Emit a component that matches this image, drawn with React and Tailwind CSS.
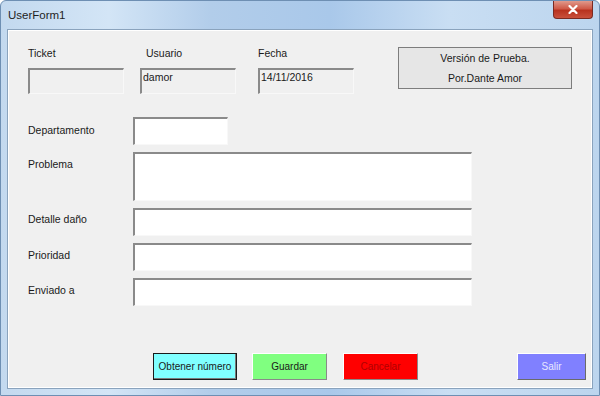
import React from 'react'

const font = { fontFamily: '"Liberation Sans", Arial, sans-serif' }

function Label({ children, className = '' }) {
  return <div className={`text-[10.5px] leading-[14px] text-[#1a1a1a] ${className}`}>{children}</div>
}

function Box({ className = '', children }) {
  return (
    <div
      className={`border-t-2 border-l-2 border-r border-b border-t-[#8a8a8a] border-l-[#8a8a8a] border-r-[#f8f8f8] border-b-[#f8f8f8] text-[10.5px] leading-[14px] text-[#1a1a1a] pl-[1px] ${className}`}
    >
      {children}
    </div>
  )
}

function FormRow({ label, boxClass, labelPad = 'pt-[5px]' }) {
  return (
    <div className="flex items-start">
      <Label className={`w-[105px] ${labelPad}`}>{label}</Label>
      <Box className={`bg-white ${boxClass}`} />
    </div>
  )
}

function Btn({ children, className = '' }) {
  return (
    <button
      className={`h-[27px] flex items-center justify-center text-[10px] border ${className}`}
    >
      {children}
    </button>
  )
}

export default function App() {
  return (
    <div
      className="w-[600px] h-[396px] flex flex-col overflow-hidden bg-[linear-gradient(90deg,#c3d9ef_0%,#d3e5f6_18%,#b2cdea_35%,#a9c8ea_55%,#c9def3_75%,#bcd5ee_100%)] border border-[#6e8fb3] rounded-t-[6px]"
      style={font}
    >
      {/* Title bar */}
      <div className="h-[28px] flex items-start justify-between shrink-0">
        <div className="pl-[7px] pt-[6px] text-[11.5px] text-[#1e1e1e]">UserForm1</div>
        <div className="mr-[6px] w-[40px] h-[18px] rounded-b-[4px] border border-t-0 border-[#7a2a22] bg-[linear-gradient(180deg,#e09a8c_0%,#cf5a48_45%,#b8321f_55%,#c9503c_100%)] flex items-center justify-center">
          <svg width="10" height="9" viewBox="0 0 10 9">
            <path d="M1.5 1 L8.5 8 M8.5 1 L1.5 8" stroke="#ffffff" strokeWidth="2.2" strokeLinecap="round" />
          </svg>
        </div>
      </div>

      {/* Client area */}
      <div className="mx-[6px] h-[360px] bg-[#f0f0f0] border border-[#8aa3bd] shadow-[inset_0_0_0_1px_#ffffff] flex flex-col">
        {/* Top row */}
        <div className="flex items-start pl-[20px] pt-[16px]">
          <div className="w-[96px]">
            <Label className="mb-[8px]">Ticket</Label>
            <Box className="h-[26px] bg-[#f0f0f0]" />
          </div>
          <div className="w-[96px] ml-[16px]">
            <Label className="mb-[8px] pl-[6px]">Usuario</Label>
            <Box className="h-[26px] bg-[#f0f0f0]">damor</Box>
          </div>
          <div className="w-[96px] ml-[22px]">
            <Label className="mb-[8px]">Fecha</Label>
            <Box className="h-[26px] bg-[#f0f0f0]">14/11/2016</Box>
          </div>
          <div className="ml-[44px] mt-[1px] w-[174px] h-[42px] border border-[#7d7d7d] bg-[#e6e6e6] flex flex-col items-center justify-center gap-[6px] text-[10.5px] leading-[14px] text-[#1a1a1a]">
            <div>Versión de Prueba.</div>
            <div>Por.Dante Amor</div>
          </div>
        </div>

        {/* Form rows */}
        <div className="flex flex-col gap-[7px] pl-[20px] mt-[23px]">
          <FormRow label="Departamento" boxClass="w-[95px] h-[28px]" labelPad="pt-[6px]" />
          <FormRow label="Problema" boxClass="w-[339px] h-[49px]" />
          <FormRow label="Detalle daño" boxClass="w-[339px] h-[28px]" labelPad="pt-[4px]" />
          <FormRow label="Prioridad" boxClass="w-[339px] h-[28px]" />
          <FormRow label="Enviado a" boxClass="w-[339px] h-[28px]" />
        </div>

        {/* Buttons */}
        <div className="flex items-start mt-[47px] pl-[145px]">
          <Btn className="w-[84px] bg-[#80ffff] border-[#1a1a1a] text-[#1a1a1a] shadow-[inset_-1px_-1px_0_#7a7a7a]">
            Obtener número
          </Btn>
          <Btn className="w-[75px] ml-[15px] bg-[#80ff80] border-t-[#ffffff] border-l-[#ffffff] border-r-[#8a8a8a] border-b-[#8a8a8a] text-[#1a1a1a]">
            Guardar
          </Btn>
          <Btn className="w-[75px] ml-[16px] bg-[#ff0000] border-t-[#ffffff] border-l-[#ffffff] border-r-[#8a8a8a] border-b-[#8a8a8a] text-[#b00000]">
            Cancelar
          </Btn>
          <Btn className="w-[69px] ml-[99px] bg-[#8080ff] border-t-[#ffffff] border-l-[#ffffff] border-r-[#6a6a6a] border-b-[#6a6a6a] text-[#e8e8ff]">
            Salir
          </Btn>
        </div>
      </div>
    </div>
  )
}
